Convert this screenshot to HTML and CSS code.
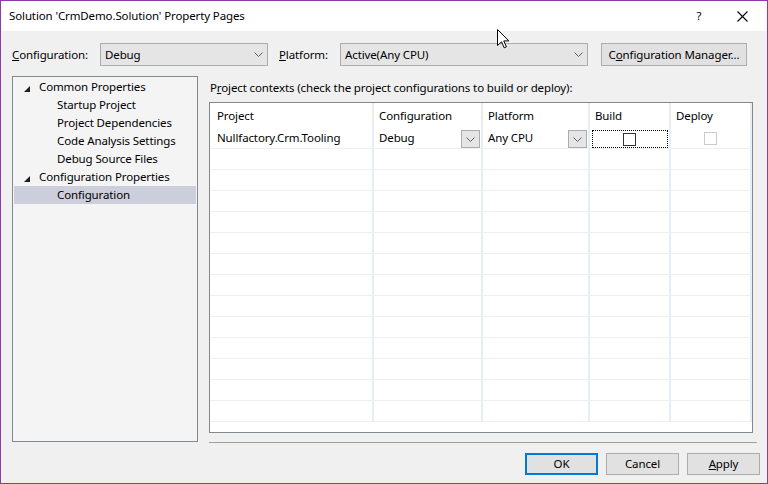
FILE: index.html
```html
<!DOCTYPE html>
<html>
<head>
<meta charset="utf-8">
<link rel="stylesheet" href="styles.css">
</head>
<body>
<div class="window">
  <div class="titlebar">
    <span class="title">Solution 'CrmDemo.Solution' Property Pages</span>
    <span class="help">?</span>
    <span class="close"><svg width="11" height="11" viewBox="0 0 11 11"><path d="M0.5 0.5 L10.5 10.5 M10.5 0.5 L0.5 10.5" stroke="#000" stroke-width="1.1" fill="none"/></svg></span>
  </div>

  <div class="config-row">
    <span class="lbl lbl-config"><u>C</u>onfiguration:</span>
    <div class="combo combo-config"><span>Debug</span><svg class="chev" width="9" height="5" viewBox="0 0 9 5"><path d="M0.5 0.5 L4.5 4.5 L8.5 0.5" stroke="#606060" fill="none"/></svg></div>
    <span class="lbl lbl-platform"><u>P</u>latform:</span>
    <div class="combo combo-platform"><span>Active(Any CPU)</span><svg class="chev" width="9" height="5" viewBox="0 0 9 5"><path d="M0.5 0.5 L4.5 4.5 L8.5 0.5" stroke="#606060" fill="none"/></svg></div>
    <button class="btn btn-cm">C<u>o</u>nfiguration Manager...</button>
  </div>

  <div class="main">
    <div class="tree">
      <div class="node parent"><svg class="tri" width="6" height="6" viewBox="0 0 6 6"><polygon points="6,0 6,6 0,6" fill="#1e1e1e"/></svg>Common Properties</div>
      <div class="node child">Startup Project</div>
      <div class="node child">Project Dependencies</div>
      <div class="node child">Code Analysis Settings</div>
      <div class="node child">Debug Source Files</div>
      <div class="node parent"><svg class="tri" width="6" height="6" viewBox="0 0 6 6"><polygon points="6,0 6,6 0,6" fill="#1e1e1e"/></svg>Configuration Properties</div>
      <div class="node child selected">Configuration</div>
    </div>

    <div class="right">
      <div class="ctx-label">P<u>r</u>oject contexts (check the project configurations to build or deploy):</div>
      <div class="grid">
        <div class="row header">
          <div class="cell c1">Project</div>
          <div class="cell">Configuration</div>
          <div class="cell">Platform</div>
          <div class="cell">Build</div>
          <div class="cell">Deploy</div>
        </div>
        <div class="row">
          <div class="cell c1">Nullfactory.Crm.Tooling</div>
          <div class="cell drop"><span>Debug</span><span class="mini"><svg width="9" height="5" viewBox="0 0 9 5"><path d="M0.5 0.5 L4.5 4.5 L8.5 0.5" stroke="#606060" fill="none"/></svg></span></div>
          <div class="cell drop"><span>Any CPU</span><span class="mini"><svg width="9" height="5" viewBox="0 0 9 5"><path d="M0.5 0.5 L4.5 4.5 L8.5 0.5" stroke="#606060" fill="none"/></svg></span></div>
          <div class="cell chk"><span class="focus"><span class="box"></span></span></div>
          <div class="cell chk"><span class="box disabled"></span></div>
        </div>
        <div class="row"><div class="cell c1"></div><div class="cell"></div><div class="cell"></div><div class="cell"></div><div class="cell"></div></div>
        <div class="row"><div class="cell c1"></div><div class="cell"></div><div class="cell"></div><div class="cell"></div><div class="cell"></div></div>
        <div class="row"><div class="cell c1"></div><div class="cell"></div><div class="cell"></div><div class="cell"></div><div class="cell"></div></div>
        <div class="row"><div class="cell c1"></div><div class="cell"></div><div class="cell"></div><div class="cell"></div><div class="cell"></div></div>
        <div class="row"><div class="cell c1"></div><div class="cell"></div><div class="cell"></div><div class="cell"></div><div class="cell"></div></div>
        <div class="row"><div class="cell c1"></div><div class="cell"></div><div class="cell"></div><div class="cell"></div><div class="cell"></div></div>
        <div class="row"><div class="cell c1"></div><div class="cell"></div><div class="cell"></div><div class="cell"></div><div class="cell"></div></div>
        <div class="row"><div class="cell c1"></div><div class="cell"></div><div class="cell"></div><div class="cell"></div><div class="cell"></div></div>
        <div class="row"><div class="cell c1"></div><div class="cell"></div><div class="cell"></div><div class="cell"></div><div class="cell"></div></div>
        <div class="row"><div class="cell c1"></div><div class="cell"></div><div class="cell"></div><div class="cell"></div><div class="cell"></div></div>
        <div class="row"><div class="cell c1"></div><div class="cell"></div><div class="cell"></div><div class="cell"></div><div class="cell"></div></div>
        <div class="row"><div class="cell c1"></div><div class="cell"></div><div class="cell"></div><div class="cell"></div><div class="cell"></div></div>
        <div class="row"><div class="cell c1"></div><div class="cell"></div><div class="cell"></div><div class="cell"></div><div class="cell"></div></div>
      </div>
      <div class="sep"></div>
    </div>
  </div>

  <div class="footer">
    <button class="btn btn-ok">OK</button>
    <button class="btn">Cancel</button>
    <button class="btn"><u>A</u>pply</button>
  </div>

  <svg class="cursor" width="13" height="20" viewBox="0 0 13 20"><path d="M0.5 0.5 L0.5 16.5 L4.5 12.8 L7.2 18.8 L9.4 17.9 L6.8 11.9 L11.8 11.9 Z" fill="#fff" stroke="#000" stroke-width="1" stroke-linejoin="miter"/></svg>
</div>
</body>
</html>
```

FILE: styles.css
```css
html, body {
  margin: 0;
  padding: 0;
  background: #f0f0f0;
}

body {
  font-family: "Noto Sans", "Open Sans", sans-serif;
  font-size: 11.5px;
  letter-spacing: -0.12px;
  color: #000;
}

.window {
  position: relative;
  width: 768px;
  height: 484px;
  box-sizing: border-box;
  border: 1px solid #8e3aa6;
  background: #f0f0f0;
  display: flex;
  flex-direction: column;
  overflow: hidden;
}

u {
  text-decoration: underline;
  text-underline-offset: 1px;
}

/* title bar */
.titlebar {
  height: 30px;
  flex: none;
  background: #fff;
  display: flex;
  align-items: center;
  padding-left: 8px;
}

.title {
  flex: 1;
  line-height: 16px;
}

.help {
  width: 12px;
  text-align: center;
  margin-right: 32px;
  line-height: 16px;
}

.close {
  display: flex;
  margin-right: 19px;
}

/* configuration row */
.config-row {
  flex: none;
  display: flex;
  align-items: center;
  padding: 12px 0 0 11px;
  height: 23px;
}

.lbl {
  line-height: 16px;
}

.lbl-config {
  width: 88px;
}

.lbl-platform {
  width: 61px;
  margin-left: 11px;
}

.combo {
  box-sizing: border-box;
  height: 23px;
  background: #e5e5e5;
  border: 1px solid #acacac;
  display: flex;
  align-items: center;
  justify-content: space-between;
  padding: 0 4px 0 4px;
}

.combo-config {
  width: 168px;
}

.combo-platform {
  width: 248px;
}

.chev {
  display: block;
}

.btn {
  box-sizing: border-box;
  font: inherit;
  letter-spacing: inherit;
  color: #000;
  background: #e1e1e1;
  border: 1px solid #adadad;
  padding: 0;
  height: 22px;
  width: 73px;
  line-height: 16px;
  white-space: nowrap;
}

.btn-cm {
  margin-left: 13px;
  width: 146px;
  height: 23px;
}

/* main */
.main {
  flex: none;
  display: flex;
  margin-top: 10px;
  padding-left: 11px;
}

.tree {
  box-sizing: border-box;
  width: 186px;
  height: 366px;
  background: #f4f4f4;
  border: 1px solid #828790;
  padding: 1px 1px 0 1px;
}

.node {
  height: 18px;
  line-height: 18px;
  display: flex;
  align-items: center;
  white-space: nowrap;
}

.node.parent {
  padding-left: 10px;
}

.tri {
  flex: none;
  margin-right: 9px;
  margin-top: 3px;
}

.node.child {
  padding-left: 43px;
}

.node.selected {
  background: #cccedb;
}

.right {
  margin-left: 11px;
  width: 548px;
  display: flex;
  flex-direction: column;
}

.ctx-label {
  height: 26px;
  box-sizing: border-box;
  padding: 4px 0 0 1px;
  line-height: 16px;
  white-space: nowrap;
}

.grid {
  box-sizing: border-box;
  width: 544px;
  height: 331px;
  border: 1px solid #828790;
  background: #fff;
  overflow: hidden;
}

.row {
  display: grid;
  grid-template-columns: 164px 109px 107px 81px 81px;
  height: 21px;
}

.row.header {
  height: 25px;
}

.cell {
  box-sizing: border-box;
  border-right: 2px solid #e8eef8;
  border-bottom: 1px solid #efefef;
  padding-left: 5px;
  display: flex;
  align-items: center;
  white-space: nowrap;
  line-height: 16px;
}

.cell.c1 {
  padding-left: 7px;
}

.header .cell {
  border-bottom: 0;
  border-right-color: #ebebeb;
  padding-left: 5px;
  padding-top: 1px;
}

.header .cell.c1 {
  padding-left: 7px;
}

.cell.drop {
  justify-content: space-between;
  padding-right: 1px;
}

.mini {
  box-sizing: border-box;
  width: 19px;
  height: 18px;
  margin-top: 2px;
  align-self: flex-start;
  background: #e5e5e5;
  border: 1px solid #acacac;
  display: flex;
  align-items: center;
  justify-content: center;
}

.mini svg {
  display: block;
}

.cell.chk {
  justify-content: center;
  padding-left: 0;
}

.focus {
  box-sizing: border-box;
  width: 76px;
  height: 18px;
  margin-top: 2px;
  align-self: flex-start;
  border: 1px dotted #000;
  display: flex;
  align-items: center;
  justify-content: center;
}

.box {
  box-sizing: border-box;
  width: 13px;
  height: 13px;
  border: 1px solid #333;
  background: #fff;
}

.box.disabled {
  border-color: #cccccc;
}

.sep {
  margin-top: 9px;
  height: 1px;
  background: #a0a0a0;
}

/* footer */
.footer {
  flex: none;
  display: flex;
  justify-content: flex-end;
  gap: 8px;
  margin-top: 10px;
  padding-right: 7px;
}

.btn-ok {
  border: 2px solid #0078d7;
}

.cursor {
  position: absolute;
  left: 496px;
  top: 28px;
}
```
